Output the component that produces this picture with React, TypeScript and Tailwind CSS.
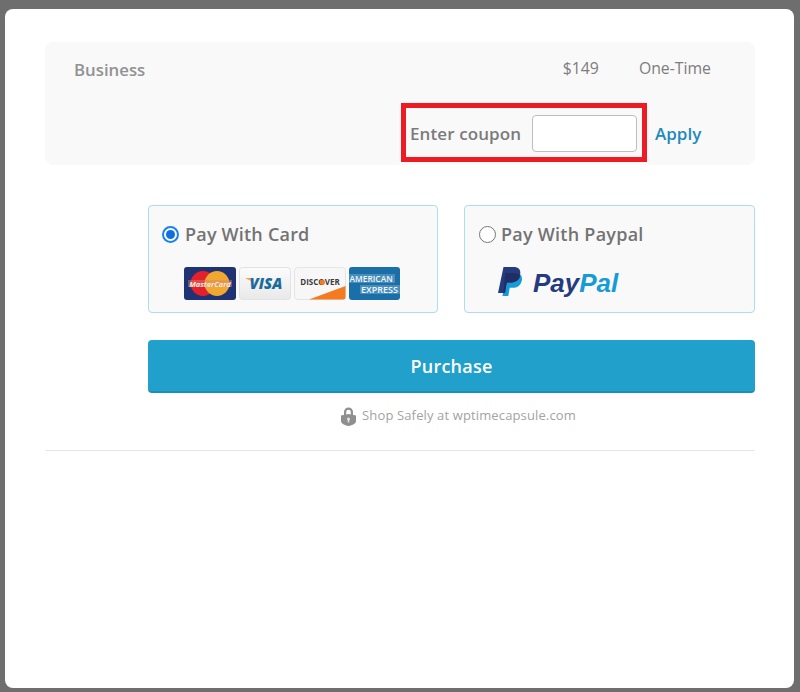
const FONT = "font-['Open_Sans',sans-serif]";

function MasterCard() {
  return (
    <svg width="52" height="33" viewBox="0 0 52 33">
      <rect width="52" height="33" rx="3" fill="#1f3274" />
      <circle cx="19" cy="16.5" r="12.5" fill="#e3202c" />
      <circle cx="33" cy="16.5" r="12.5" fill="#f0a830" />
      <rect x="4" y="13" width="44" height="7" fill="#d9866a" opacity="0.45" />
      <text x="26" y="19.5" textAnchor="middle" fontSize="7.5" fontWeight="700" fontStyle="italic" fill="#f6e9dc" fontFamily="Open Sans">
        MasterCard
      </text>
    </svg>
  );
}

function Visa() {
  return (
    <svg width="52" height="33" viewBox="0 0 52 33">
      <defs>
        <linearGradient id="visaBg" x1="0" y1="0" x2="0" y2="1">
          <stop offset="0" stopColor="#fbfbfb" />
          <stop offset="1" stopColor="#e9e9e9" />
        </linearGradient>
      </defs>
      <rect x="0.5" y="0.5" width="51" height="32" rx="3" fill="url(#visaBg)" stroke="#e2e2e2" />
      <path d="M6 11h6l2 4z" fill="#f0a63a" />
      <text x="27" y="22" textAnchor="middle" fontSize="15" fontWeight="800" fontStyle="italic" fill="#1d6a9c" fontFamily="Open Sans">
        VISA
      </text>
    </svg>
  );
}

function Discover() {
  return (
    <svg width="52" height="33" viewBox="0 0 52 33">
      <rect x="0.5" y="0.5" width="51" height="32" rx="3" fill="#f7f7f7" stroke="#e4e4e4" />
      <path d="M15 32.5 L51.5 19 V30 a2.5 2.5 0 0 1 -2.5 2.5 z" fill="#f47b20" />
      <text x="26" y="18" textAnchor="middle" fontSize="8" fontWeight="700" fill="#3b3b3b" fontFamily="Open Sans">
        DISCOVER
      </text>
      <circle cx="28.3" cy="15.3" r="2.6" fill="#f47b20" />
    </svg>
  );
}

function Amex() {
  return (
    <svg width="52" height="33" viewBox="0 0 52 33">
      <rect width="51" height="33" rx="3" fill="#1b6fa8" />
      <rect x="0" y="7" width="46" height="9" fill="#8fbcd8" opacity="0.4" />
      <rect x="11" y="18" width="40" height="9" fill="#8fbcd8" opacity="0.4" />
      <text x="0.5" y="14.5" fontSize="8.4" fontWeight="600" fill="#f1f7fb" fontFamily="Open Sans">
        AMERICAN
      </text>
      <text x="12" y="25.5" fontSize="9" fontWeight="600" fill="#f1f7fb" fontFamily="Open Sans">
        EXPRESS
      </text>
    </svg>
  );
}

function PayPalLogo() {
  return (
    <div className="flex items-center gap-[9px]">
      <svg width="26" height="32" viewBox="0 0 26 32">
        <path d="M8 6h10c3.8 0 6.6 2.6 5.900 7-.8 5-4.200 7.800-8.800 7.800h-3.400L10.300 29H4.500z" fill="#179bd7" />
        <path d="M5.500 0h10.400c4.400 0 7 2.700 6.300 6.900-.9 5.600-4.700 8.600-9.700 8.600H8.700L7 26H0z" fill="#253b80" />
        <path d="M7.300 6h8.200c3 0 5.500 1 6.700 3-1 4.300-4.600 6.500-9.700 6.500H8.700L7 26H5.400z" fill="#222d65" />
      </svg>
      <span className="text-[26px] leading-none font-bold italic font-['Liberation_Sans',sans-serif]">
        <span className="text-[#253b80]">Pay</span>
        <span className="text-[#179bd7]">Pal</span>
      </span>
    </div>
  );
}

function Lock() {
  return (
    <svg width="17" height="20" viewBox="0 0 17 20">
      <path d="M4 9V6a4.500 4.500 0 0 1 9 0v3h-2.200V6a2.300 2.300 0 0 0-4.600 0v3z" fill="#8f8f8f" />
      <path d="M1 9.500 L8.500 8 16 9.500V15c0 2.500-3.500 4.200-7.500 5C4.500 19.200 1 17.500 1 15z" fill="#8f8f8f" />
      <circle cx="8.500" cy="13" r="1.500" fill="#e4e4e4" />
      <rect x="7.800" y="13" width="1.400" height="3.500" fill="#e4e4e4" />
    </svg>
  );
}

function Radio({ checked }: { checked?: boolean }) {
  return checked ? (
    <span className="flex h-[17px] w-[17px] items-center justify-center rounded-full border-2 border-[#1a82f0] bg-white">
      <span className="h-[9px] w-[9px] rounded-full bg-[#0f6fe0]" />
    </span>
  ) : (
    <span className="h-[17px] w-[17px] rounded-full border border-[#767676] bg-white" />
  );
}

export default function App() {
  return (
    <div className={`h-[692px] w-[800px] overflow-hidden bg-[#6e6e6e] pt-[9px] pl-[5px] ${FONT}`}>
      <div className="h-[679px] w-[789px] rounded-[8px] bg-white px-[40px] pt-[33px]">
        {/* plan summary */}
        <div className="flex h-[123px] w-[710px] flex-col rounded-[8px] bg-[#f9f9f9]">
          <div className="flex h-[61px] items-center pb-[5px] pl-[29px] pr-[44px]">
            <span className="text-[16.800px] font-semibold text-[#929292]">Business</span>
            <span className="mb-[2px] ml-auto text-[15.800px] text-[#7d7d7d]">$149</span>
            <span className="mb-[2px] ml-[40px] text-[15.800px] text-[#7d7d7d]">One-Time</span>
          </div>
          <div className="flex items-center pl-[356px]">
            <div className="flex h-[59px] w-[246px] items-center border-[5px] border-[#ed1c24] pl-[4px]">
              <span className="mt-[2px] text-[17px] font-semibold tracking-[0.1px] text-[#7b7b7b]">Enter coupon</span>
              <input className="mt-[2px] ml-[11px] h-[37px] w-[105px] rounded-[4px] border border-[#bdbdbd] bg-white" />
            </div>
            <a className="mt-[2px] ml-[8px] text-[17px] font-semibold text-[#2389bd]">Apply</a>
          </div>
        </div>

        {/* payment options */}
        <div className="mt-[40px] ml-[103px] w-[607px]">
          <div className="flex gap-[26px]">
            <div className="h-[108px] w-[290px] rounded-[4px] border border-[#aedcf0] bg-[#f9f9f9] pt-[16px]">
              <div className="flex items-center gap-[6px] pl-[13px]">
                <Radio checked />
                <span className="text-[18px] leading-[24px] font-semibold tracking-[0.2px] text-[#737373]">Pay With Card</span>
              </div>
              <div className="mt-[21px] flex gap-[3px] pl-[35px]">
                <MasterCard />
                <Visa />
                <Discover />
                <Amex />
              </div>
            </div>
            <div className="h-[108px] w-[291px] rounded-[4px] border border-[#aedcf0] bg-[#f9f9f9] pt-[16px]">
              <div className="flex items-center gap-[5px] pl-[14px]">
                <Radio />
                <span className="text-[18px] leading-[24px] font-semibold tracking-[0.25px] text-[#737373]">Pay With Paypal</span>
              </div>
              <div className="mt-[21px] pl-[33px]">
                <PayPalLogo />
              </div>
            </div>
          </div>

          <button className="mt-[27px] block h-[53px] w-[607px] rounded-[4px] border-b-2 border-[#1b8fbb] bg-[#21a0cb] pt-[2px] text-[18px] font-semibold tracking-[0.25px] text-white">
            Purchase
          </button>

          <div className="mt-[13px] flex items-center justify-center gap-[5px] pl-[13px]">
            <Lock />
            <span className="text-[13px] tracking-[0.13px] text-[#a3a3a3]">Shop Safely at wptimecapsule.com</span>
          </div>
        </div>

        <div className="mt-[24px] h-px w-[710px] bg-[#e8e8e8]" />
      </div>
    </div>
  );
}
